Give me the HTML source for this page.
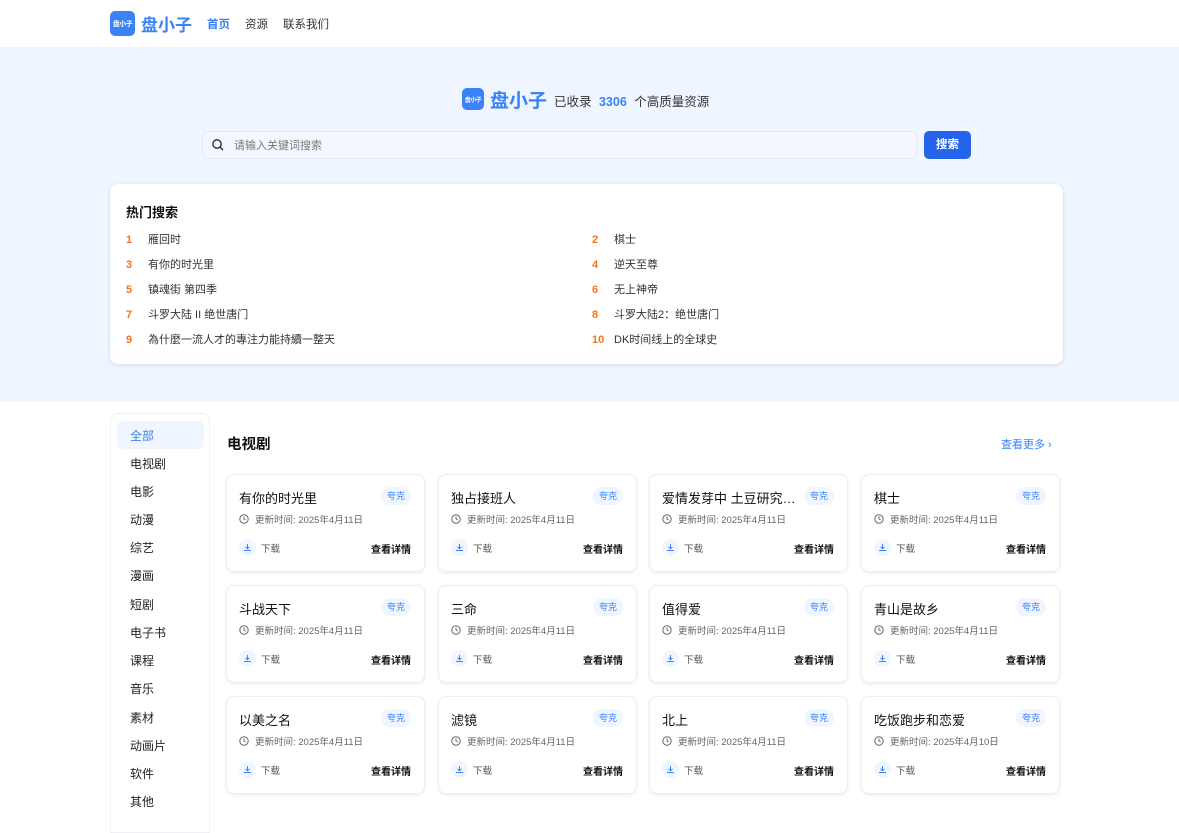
<!DOCTYPE html>
<html><head><meta charset="utf-8"><style>
*{margin:0;padding:0;box-sizing:border-box}
body{width:1179px;height:821px;overflow:hidden;font-family:"Liberation Sans","Noto Sans CJK SC",sans-serif;background:#fff;color:#111;position:relative}
.abs{position:absolute}
.logo{background:#3b82f6;color:#fff;border-radius:5px;font-size:7px;font-weight:bold;display:flex;align-items:center;justify-content:center;letter-spacing:-0.5px}
.hero{position:absolute;left:0;top:47px;width:1179px;height:355px;background:#eff6ff}
.hot{position:absolute;left:110px;top:184px;width:953px;height:180px;background:#fff;border-radius:8px;box-shadow:0 1px 4px rgba(0,0,0,.12)}
.hi{position:absolute;font-size:11px;color:#333}
.hi b{color:#f97316;font-weight:bold;display:inline-block;width:22px}
.side{position:absolute;left:110px;top:413px;width:100px;height:420px;border:1px solid #eef0f3;border-radius:8px 8px 0 0}
.si{position:absolute;left:19px;font-size:12px;color:#222}
.card{position:absolute;width:199px;height:98px;background:#fff;border:1px solid #eceef1;border-radius:8px;box-shadow:0 1px 3px rgba(0,0,0,.08)}
.card .t{position:absolute;left:12px;top:13px;font-size:13px;color:#111;width:140px;white-space:nowrap;overflow:hidden;text-overflow:ellipsis}
.card .tag{position:absolute;right:13px;top:12px;width:30px;height:18px;border-radius:9px;background:#eff6ff;color:#3b82f6;font-size:9px;text-align:center;line-height:18px}
.card .d{position:absolute;left:12px;top:37px;font-size:9.5px;color:#666;display:flex;align-items:center;gap:6px}
.card .dl{position:absolute;left:12px;top:64px;font-size:9.5px;color:#555;display:flex;align-items:center;gap:5px}
.card .dl i{width:17px;height:17px;border-radius:50%;background:#eff6ff;display:flex;align-items:center;justify-content:center}
.card .v{position:absolute;right:13px;top:66px;font-size:10px;color:#111;font-weight:bold}
</style></head><body>
<div class="abs logo" style="left:110px;top:11px;width:25px;height:25px">盘小子</div>
<div class="abs" style="left:141px;top:11px;font-size:17px;font-weight:bold;color:#3b82f6">盘小子</div>
<div class="abs" style="left:207px;top:16px;font-size:11.5px;color:#3b82f6;font-weight:bold">首页</div>
<div class="abs" style="left:245px;top:16px;font-size:11.5px;color:#333">资源</div>
<div class="abs" style="left:283px;top:16px;font-size:11.5px;color:#333">联系我们</div>
<div class="hero"></div>
<div class="abs logo" style="left:462px;top:88px;width:22px;height:22px;font-size:6px">盘小子</div>
<div class="abs" style="left:490px;top:86px;font-size:19px;font-weight:bold;color:#3b82f6">盘小子</div>
<div class="abs" style="left:554px;top:91px;font-size:12.5px;color:#333">已收录 <b style="color:#3b82f6;margin:0 4px">3306</b> 个高质量资源</div>
<div class="abs" style="left:202px;top:131px;width:715px;height:28px;background:#f4f8fe;border:1px solid #e3eaf5;border-radius:6px"></div>
<svg class="abs" style="left:211px;top:138px" width="14" height="14" viewBox="0 0 14 14"><circle cx="6" cy="6" r="4.2" fill="none" stroke="#222" stroke-width="1.3"/><path d="M9 9l3 3" stroke="#222" stroke-width="1.3"/></svg>
<div class="abs" style="left:234px;top:137px;font-size:11px;color:#777">请输入关键词搜索</div>
<div class="abs" style="left:924px;top:131px;width:47px;height:28px;background:#2563eb;border-radius:5px;color:#fff;font-size:11.5px;font-weight:bold;text-align:center;line-height:28px">搜索</div>
<div class="hot">
<div class="abs" style="left:16px;top:18px;font-size:13px;font-weight:bold">热门搜索</div>
<div class="hi" style="left:16px;top:47px"><b>1</b>雁回时</div>
<div class="hi" style="left:16px;top:72px"><b>3</b>有你的时光里</div>
<div class="hi" style="left:16px;top:97px"><b>5</b>镇魂街 第四季</div>
<div class="hi" style="left:16px;top:122px"><b>7</b>斗罗大陆 II 绝世唐门</div>
<div class="hi" style="left:16px;top:147px"><b>9</b>為什麼一流人才的專注力能持續一整天</div>
<div class="hi" style="left:482px;top:47px"><b>2</b>棋士</div>
<div class="hi" style="left:482px;top:72px"><b>4</b>逆天至尊</div>
<div class="hi" style="left:482px;top:97px"><b>6</b>无上神帝</div>
<div class="hi" style="left:482px;top:122px"><b>8</b>斗罗大陆2：绝世唐门</div>
<div class="hi" style="left:482px;top:147px"><b>10</b>DK时间线上的全球史</div>
</div>
<div class="side">
<div class="abs" style="left:6px;top:7px;width:87px;height:28px;background:#eff6ff;border-radius:6px"></div>
<div class="si" style="top:13px;color:#3b82f6">全部</div>
<div class="si" style="top:41px">电视剧</div>
<div class="si" style="top:69px">电影</div>
<div class="si" style="top:97px">动漫</div>
<div class="si" style="top:125px">综艺</div>
<div class="si" style="top:153px">漫画</div>
<div class="si" style="top:182px">短剧</div>
<div class="si" style="top:210px">电子书</div>
<div class="si" style="top:238px">课程</div>
<div class="si" style="top:266px">音乐</div>
<div class="si" style="top:295px">素材</div>
<div class="si" style="top:323px">动画片</div>
<div class="si" style="top:351px">软件</div>
<div class="si" style="top:379px">其他</div>
</div>
<div class="abs" style="left:227px;top:433px;font-size:14.5px;font-weight:bold">电视剧</div>
<div class="abs" style="left:1001px;top:436px;font-size:11px;color:#3b82f6">查看更多 ›</div>
<div id="cards"></div>
<script>
var n=["有你的时光里","独占接班人","爱情发芽中 土豆研究所篇","棋士","斗战天下","三命","值得爱","青山是故乡","以美之名","滤镜","北上","吃饭跑步和恋爱"];
var xs=[226,438,649,861],ys=[474,585,696],h="";
for(var i=0;i<12;i++){var d=i==11?"10":"11";
h+='<div class="card" style="left:'+xs[i%4]+'px;top:'+ys[Math.floor(i/4)]+'px"><div class="t">'+n[i]+'</div><div class="tag">夸克</div><div class="d"><svg width="10" height="10" viewBox="0 0 10 10"><circle cx="5" cy="5" r="4.2" fill="none" stroke="#666" stroke-width="1"/><path d="M5 2.5V5l1.7 1" fill="none" stroke="#666" stroke-width="1"/></svg>更新时间: 2025年4月'+d+'日</div><div class="dl"><i><svg width="9" height="9" viewBox="0 0 9 9"><path d="M4.5 1v4.5M2.5 3.8l2 2 2-2M1 7.5h7" fill="none" stroke="#3b82f6" stroke-width="1"/></svg></i>下载</div><div class="v">查看详情</div></div>';}
document.getElementById("cards").innerHTML=h;
</script>
</body></html>
